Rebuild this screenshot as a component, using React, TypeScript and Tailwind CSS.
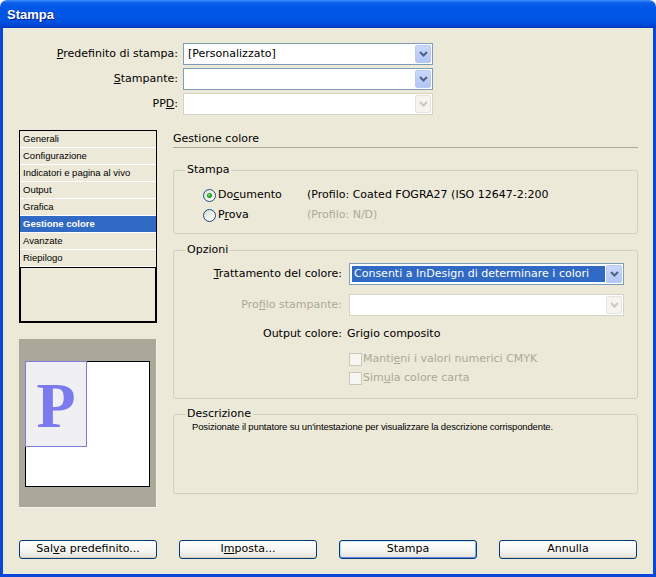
import React from 'react';

const sections = [
  'Generali',
  'Configurazione',
  'Indicatori e pagina al vivo',
  'Output',
  'Grafica',
  'Gestione colore',
  'Avanzate',
  'Riepilogo',
];

function DropButton({ disabled }: { disabled?: boolean }) {
  return (
    <div
      className={
        disabled
          ? 'flex w-[16px] items-center justify-center rounded-[2px] border border-[#E6E4DA] bg-[#F5F4EF]'
          : 'flex w-[16px] items-center justify-center rounded-[2px] border border-[#B7CAF4] bg-[linear-gradient(#CAD8FB,#B2C6F5)]'
      }
    >
      <svg width="9" height="6" viewBox="0 0 9 6">
        <path d="M1 1l3.5 3.5L8 1" fill="none" stroke={disabled ? '#CBC9BE' : '#4D6185'} strokeWidth="2" />
      </svg>
    </div>
  );
}

function Combo({ className, disabled, children }: { className: string; disabled?: boolean; children?: React.ReactNode }) {
  return (
    <div className={`flex h-[22px] border bg-white p-px ${disabled ? 'border-[#D5D3C6]' : 'border-[#7F9DB9]'} ${className}`}>
      <div className="flex min-w-0 flex-1 items-stretch">{children}</div>
      <DropButton disabled={disabled} />
    </div>
  );
}

function Radio({ checked }: { checked?: boolean }) {
  return (
    <svg width="13" height="13" viewBox="0 0 13 13" className="shrink-0">
      <defs>
        <linearGradient id="rb" x1="0" y1="0" x2="1" y2="1">
          <stop offset="0" stopColor="#DCDCD4" />
          <stop offset="1" stopColor="#FFFFFF" />
        </linearGradient>
      </defs>
      <circle cx="6.5" cy="6.5" r="6" fill="url(#rb)" stroke="#1C5180" />
      {checked && <circle cx="6.5" cy="6.5" r="2.5" fill="#21A121" />}
      {checked && <circle cx="6" cy="6" r="1" fill="#8FDA8F" />}
    </svg>
  );
}

function Checkbox() {
  return <div className="h-[13px] w-[13px] shrink-0 border border-[#CAC8BB] bg-[#F7F6F1]" />;
}

function Button({ children, isDefault }: { children: React.ReactNode; isDefault?: boolean }) {
  return (
    <div
      className={`flex h-[19px] w-[138px] items-center justify-center rounded-[3px] border border-[#003C74] bg-[linear-gradient(#FFFFFF,#F4F4F0_60%,#E3E0D6)] ${
        isDefault
          ? 'shadow-[inset_0_1px_0_#CEE7FF,inset_0_-1px_0_#6982EE,inset_1px_0_0_#B8D2FA,inset_-1px_0_0_#8CAAE6]'
          : 'shadow-[inset_0_-1px_0_#D6D0C5]'
      }`}
    >
      {children}
    </div>
  );
}

export default function App() {
  return (
    <div className="h-[577px] w-[656px] bg-white font-['DejaVu_Sans',sans-serif] text-[11px] text-black">
      <div className="flex h-[28px] items-center rounded-t-[7px] bg-[linear-gradient(#3D8DF9_0px,#0A5FEB_3px,#0056E6_8px,#0055E5_19px,#004BDB_24px,#0038BE_28px)] pl-[7px] pt-[2px]">
        <span className="font-['Liberation_Sans',sans-serif] text-[13px] font-bold text-white [text-shadow:1px_1px_#0A1E8C]">Stampa</span>
      </div>

      <div className="flex h-[549px] flex-col border-x-[3px] border-b-[3px] border-[#0A48D8] bg-[#ECE9D8] pb-[15px] pl-[16px] pr-[15px] pt-[15px]">
        {/* printer rows */}
        <div className="flex flex-col gap-[3px]">
          <div className="flex items-center">
            <span className="w-[159px] text-right"><u>P</u>redefinito di stampa:</span>
            <Combo className="ml-[5px] w-[250px]">
              <span className="flex items-center pl-[3px]">[Personalizzato]</span>
            </Combo>
          </div>
          <div className="flex items-center">
            <span className="w-[159px] text-right"><u>S</u>tampante:</span>
            <Combo className="ml-[5px] w-[250px]" />
          </div>
          <div className="flex items-center">
            <span className="w-[159px] text-right">PP<u>D</u>:</span>
            <Combo className="ml-[5px] w-[250px]" disabled />
          </div>
        </div>

        <div className="mt-[15px] flex gap-[16px]">
          {/* left column */}
          <div className="flex w-[138px] flex-col">
            <div className="flex h-[193px] flex-col border border-black font-['Liberation_Sans',sans-serif] text-[9.5px]">
              {sections.map((s) => (
                <div
                  key={s}
                  className={`flex h-[17px] items-center border-b border-white pl-[3px] ${
                    s === 'Gestione colore' ? 'bg-[#316AC5] font-bold text-white' : ''
                  }`}
                >
                  {s}
                </div>
              ))}
              <div className="flex-1 border border-black" />
            </div>

            <div className="mt-[16px] flex h-[169px] flex-col border-b border-r border-[#F4F3EE] bg-[#ACA899] px-[6px] pt-[22px]">
              <div className="flex h-[126px] border border-black bg-white">
                <div className="-ml-px -mt-px flex h-[86px] w-[62px] items-center justify-center border border-[#7B7BE0] bg-[#EFEFF4] pt-[3px] font-['Liberation_Serif',serif] text-[64px] font-bold leading-none text-[#7B7BEF]">
                  P
                </div>
              </div>
            </div>
          </div>

          {/* right column */}
          <div className="flex w-[465px] flex-col">
            <div className="border-b border-[#ACA899] pb-px pt-[2px] leading-[14px]">Gestione colore</div>

            <fieldset className="mt-[15px] h-[71px] rounded-[3px] border border-[#D0D0BF]">
              <legend className="ml-[11px] px-[2px] leading-[14px]">Stampa</legend>
              <div className="mt-[8px] flex h-[20px] items-center pl-[29px]">
                <Radio checked />
                <span className="ml-[2px] w-[89px]">Do<u>c</u>umento</span>
                <span>(Profilo: Coated FOGRA27 (ISO 12647-2:200</span>
              </div>
              <div className="flex h-[20px] items-center pl-[29px]">
                <Radio />
                <span className="ml-[2px] w-[89px]">P<u>r</u>ova</span>
                <span className="text-[#ACA899]">(Profilo: N/D)</span>
              </div>
            </fieldset>

            <fieldset className="mt-[9px] h-[156px] rounded-[3px] border border-[#D0D0BF]">
              <legend className="ml-[11px] px-[2px] leading-[14px]">Opzioni</legend>
              <div className="mt-[6px] flex items-center">
                <span className="w-[168px] text-right"><u>T</u>rattamento del colore:</span>
                <Combo className="ml-[7px] w-[275px]">
                  <span className="m-px flex flex-1 items-center bg-[#316AC5] pl-[2px] text-white">
                    Consenti a InDesign di determinare i colori
                  </span>
                </Combo>
              </div>
              <div className="mt-[9px] flex items-center">
                <span className="w-[168px] text-right text-[#ACA899]">Pro<u>f</u>ilo stampante:</span>
                <Combo className="ml-[7px] w-[275px]" disabled />
              </div>
              <div className="mt-[11px] flex h-[14px] items-center">
                <span className="w-[168px] text-right">Output colore:</span>
                <span className="ml-[5px]">Grigio composito</span>
              </div>
              <div className="mt-[9px] flex h-[19px] items-center pl-[175px] text-[#ACA899]">
                <Checkbox />
                <span className="ml-px">Manti<u>e</u>ni i valori numerici CMYK</span>
              </div>
              <div className="flex h-[19px] items-center pl-[175px] text-[#ACA899]">
                <Checkbox />
                <span className="ml-px">Sim<u>u</u>la colore carta</span>
              </div>
            </fieldset>

            <fieldset className="mt-[8px] h-[87px] rounded-[3px] border border-[#D0D0BF]">
              <legend className="ml-[11px] px-[2px] leading-[14px]">Descrizione</legend>
              <p className="pl-[18px] font-['Liberation_Sans',sans-serif] text-[9.5px] leading-[12px] tracking-[-0.15px]">
                Posizionate il puntatore su un'intestazione per visualizzare la descrizione corrispondente.
              </p>
            </fieldset>
          </div>
        </div>

        <div className="mt-auto flex gap-[22px]">
          <Button>Sal<u>v</u>a predefinito...</Button>
          <Button>I<u>m</u>posta...</Button>
          <Button isDefault>Stampa</Button>
          <Button>Annulla</Button>
        </div>
      </div>
    </div>
  );
}
